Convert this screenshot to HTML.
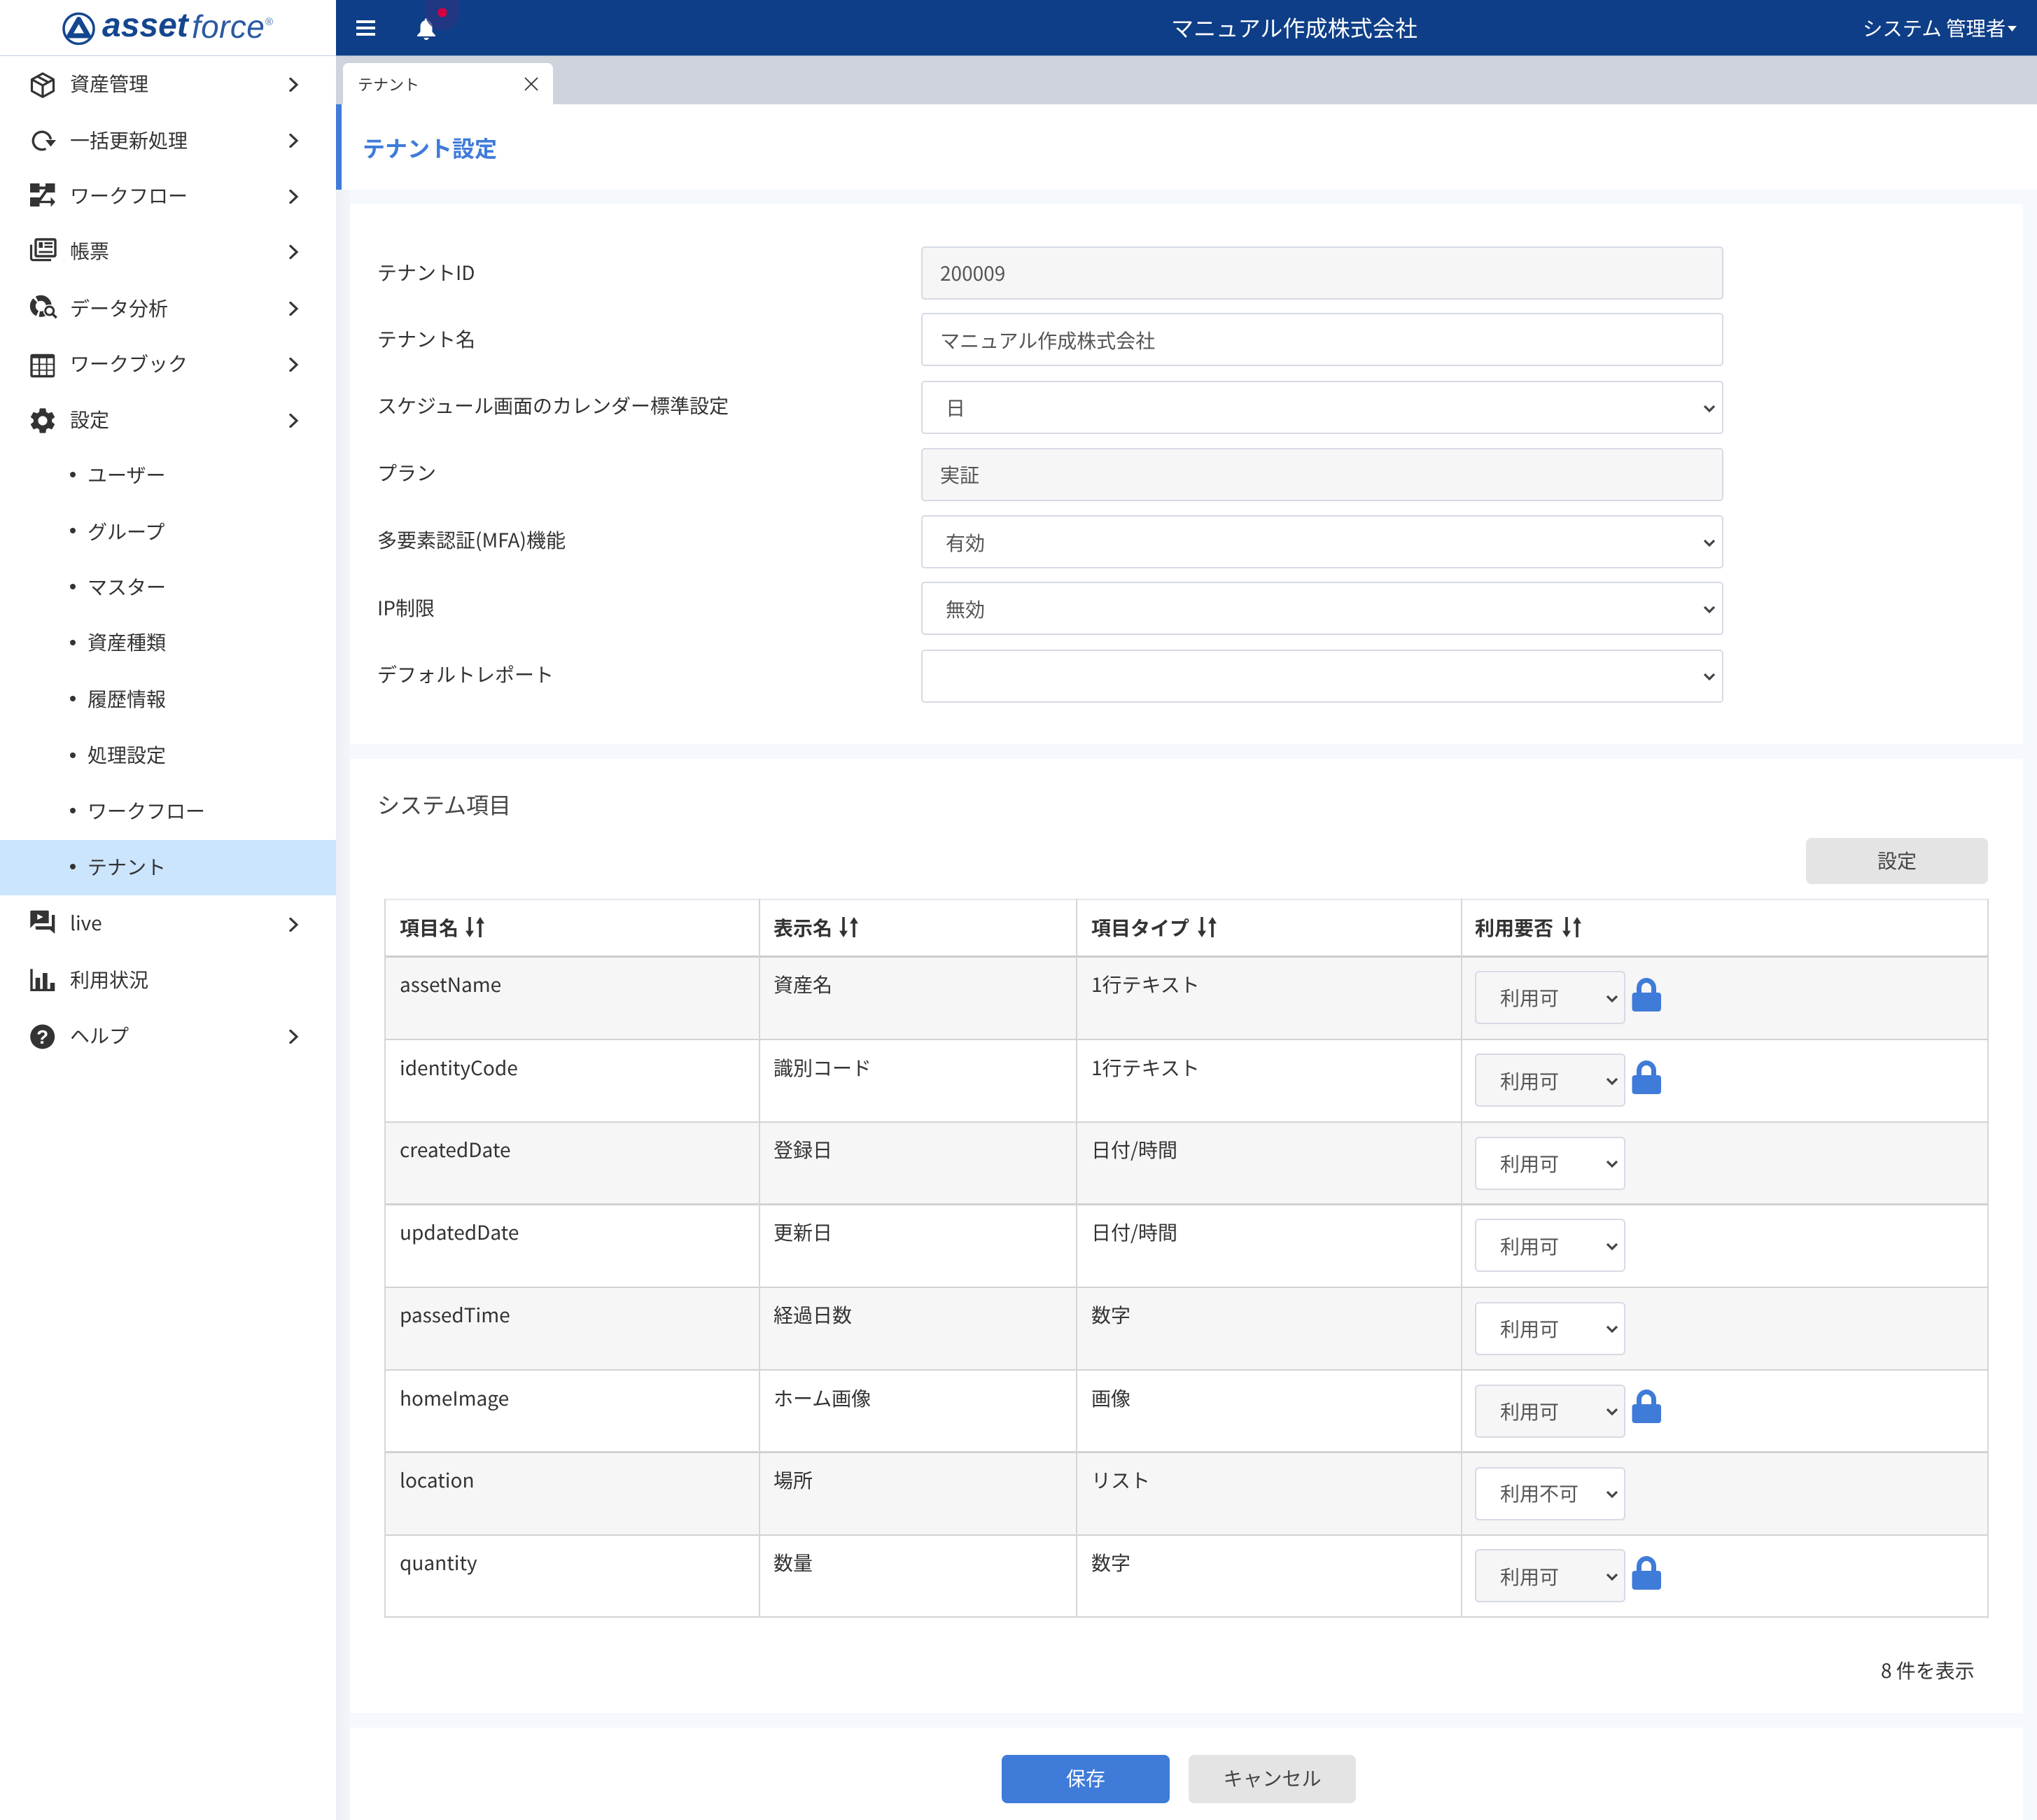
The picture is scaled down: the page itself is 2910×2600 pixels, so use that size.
<!DOCTYPE html>
<html lang="ja">
<head>
<meta charset="utf-8">
<title>テナント設定</title>
<style>
html,body{margin:0;padding:0;}
body{position:relative;width:2910px;height:2600px;overflow:hidden;background:#f5f8fd;color:#333;font-family:"Noto Sans CJK JP","Liberation Sans",sans-serif;font-size:28px;}
.a{position:absolute;}
.t{position:absolute;height:40px;line-height:40px;white-space:nowrap;}
svg{position:absolute;overflow:visible;display:block;}
.side{left:0;top:0;width:480px;height:2600px;background:#fff;}
.g{color:#555;}
.field{position:absolute;left:1316px;width:1146px;height:76px;box-sizing:border-box;border:2px solid #d6dae4;border-radius:5px;background:#fff;}
.field.dis{background:#f6f6f6;}
.sel{position:absolute;left:2107px;width:215px;height:76px;box-sizing:border-box;border:2px solid #d6dae4;border-radius:6px;background:#fff;}
.sel.dis{background:#f6f6f6;}
.row{position:absolute;left:549px;width:2291px;height:116px;}
.odd{background:#f6f6f6;}
.hl{position:absolute;left:549px;width:2292px;height:2px;background:#d2d2d2;}
.vl{position:absolute;top:1284px;width:2px;height:1026px;background:#d6d6d6;}
.btn{position:absolute;border-radius:8px;background:#e4e4e4;text-align:center;color:#444;}
b{font-weight:700;}
</style>
</head>
<body>
<!-- main backdrop -->
<div class="a" style="left:480px;top:80px;width:20px;height:2520px;background:linear-gradient(90deg,#eceff5,#f2f5fa);"></div>
<div class="a" style="left:480px;top:80px;width:2430px;height:69px;background:#ced3dc;"></div>
<div class="a" style="left:480px;top:149px;width:2430px;height:122px;background:#fff;"></div>
<div class="a" style="left:480px;top:149px;width:8px;height:122px;background:#3f7bd8;"></div>
<div class="a" style="left:500px;top:292px;width:2390px;height:771px;background:#fff;"></div>
<div class="a" style="left:500px;top:1084px;width:2390px;height:1363px;background:#fff;"></div>
<div class="a" style="left:500px;top:2468px;width:2390px;height:132px;background:#fff;"></div>

<!-- header -->
<div class="a" style="left:480px;top:0;width:2430px;height:79px;background:#0e3e87;border-bottom:1px solid #7d92b8;"></div>
<div class="a" style="left:509px;top:29px;width:27px;height:4px;background:#fff;"></div>
<div class="a" style="left:509px;top:38px;width:27px;height:4px;background:#fff;"></div>
<div class="a" style="left:509px;top:47px;width:27px;height:4px;background:#fff;"></div>
<svg style="left:595px;top:26px;" width="28" height="31" viewBox="0 0 28 31"><path fill="#fff" d="M14 0c1.400 0 2.200 1 2.200 2.300v1c4.300 1.100 6.300 4.700 6.300 9.200v7l4.500 5v1.500H1v-1.500l4.500-5v-7c0-4.500 2-8.100 6.300-9.200v-1C11.800 1 12.600 0 14 0zM10.500 28h7c0 1.800-1.500 3-3.500 3s-3.500-1.200-3.500-3z"/></svg>
<div class="a" style="left:607px;top:0;width:50px;height:43px;border-radius:0 0 25px 25px;background:#2a3680;opacity:.75;"></div>
<div class="a" style="left:626px;top:12px;width:12px;height:12px;border-radius:4px;background:#d9003f;"></div>
<div class="t" style="left:1673px;top:19px;color:#fff;font-size:32.100px;">マニュアル作成株式会社</div>
<div class="t" style="left:2661px;top:20px;color:#fff;font-size:28.400px;">システム 管理者</div>
<svg style="left:2868px;top:37px;" width="13" height="8"><path fill="#fff" d="M0 0H13L6.500 8z"/></svg>

<!-- tab -->
<div class="a" style="left:490px;top:90px;width:300px;height:59px;background:#fff;border-radius:8px 8px 0 0;"></div>
<div class="t" style="left:511px;top:100px;font-size:22px;">テナント</div>
<svg style="left:749px;top:110px;" width="20" height="20"><path d="M1 1L19 19M19 1L1 19" stroke="#333" stroke-width="1.800" fill="none"/></svg>
<div class="t" style="left:518px;top:191px;font-size:32px;font-weight:700;color:#3f7bd8;">テナント設定</div>

<!-- sidebar -->
<div class="a side"></div>
<div class="a" style="left:0;top:79px;width:480px;height:1px;background:#c9d2e0;"></div>
<svg style="left:89px;top:18px;" width="47" height="46" viewBox="0 0 47 46"><circle cx="23.500" cy="23" r="21.500" fill="none" stroke="#14468f" stroke-width="3.500"/><path d="M23.500 9.500L37 33H10z" fill="none" stroke="#14468f" stroke-width="7" stroke-linejoin="round"/></svg>
<div class="t" style="left:146px;top:10px;height:54px;line-height:54px;font-family:'Liberation Sans',sans-serif;font-size:48px;font-weight:700;font-style:italic;color:#14468f;">asset</div>
<div class="t" style="left:274px;top:11px;height:54px;line-height:54px;font-family:'Liberation Sans',sans-serif;font-size:46px;font-style:italic;letter-spacing:.4px;color:#2a5aa0;">force</div>
<div class="t" style="left:379px;top:22px;height:20px;line-height:20px;font-family:'Liberation Sans',sans-serif;font-size:15px;color:#3f6aa6;">®</div>

<div class="t" style="left:100px;top:99px;">資産管理</div>
<div class="t" style="left:100px;top:180px;">一括更新処理</div>
<div class="t" style="left:100px;top:259px;">ワークフロー</div>
<div class="t" style="left:100px;top:338px;">帳票</div>
<div class="t" style="left:100px;top:420px;">データ分析</div>
<div class="t" style="left:100px;top:499px;">ワークブック</div>
<div class="t" style="left:100px;top:579px;">設定</div>

<div class="a" style="left:0;top:1200px;width:480px;height:79px;background:#cbe5fd;"></div>
<div class="a" style="left:100px;top:674px;width:8px;height:8px;border-radius:50%;background:#333;"></div><div class="t" style="left:125px;top:658px;">ユーザー</div>
<div class="a" style="left:100px;top:754px;width:8px;height:8px;border-radius:50%;background:#333;"></div><div class="t" style="left:125px;top:739px;">グループ</div>
<div class="a" style="left:100px;top:834px;width:8px;height:8px;border-radius:50%;background:#333;"></div><div class="t" style="left:125px;top:818px;">マスター</div>
<div class="a" style="left:100px;top:914px;width:8px;height:8px;border-radius:50%;background:#333;"></div><div class="t" style="left:125px;top:897px;">資産種類</div>
<div class="a" style="left:100px;top:994px;width:8px;height:8px;border-radius:50%;background:#333;"></div><div class="t" style="left:125px;top:978px;">履歴情報</div>
<div class="a" style="left:100px;top:1075px;width:8px;height:8px;border-radius:50%;background:#333;"></div><div class="t" style="left:125px;top:1058px;">処理設定</div>
<div class="a" style="left:100px;top:1154px;width:8px;height:8px;border-radius:50%;background:#333;"></div><div class="t" style="left:125px;top:1138px;">ワークフロー</div>
<div class="a" style="left:100px;top:1234px;width:8px;height:8px;border-radius:50%;background:#333;"></div><div class="t" style="left:125px;top:1218px;">テナント</div>

<div class="t" style="left:100px;top:1298px;">live</div>
<div class="t" style="left:100px;top:1379px;">利用状況</div>
<div class="t" style="left:100px;top:1459px;">ヘルプ</div>

<!-- sidebar chevrons -->
<svg style="left:412px;top:110px;" width="14" height="22"><path d="M2 1.500L12 11L2 20.500" fill="none" stroke="#333" stroke-width="3.200"/></svg>
<svg style="left:412px;top:190px;" width="14" height="22"><path d="M2 1.500L12 11L2 20.500" fill="none" stroke="#333" stroke-width="3.200"/></svg>
<svg style="left:412px;top:270px;" width="14" height="22"><path d="M2 1.500L12 11L2 20.500" fill="none" stroke="#333" stroke-width="3.200"/></svg>
<svg style="left:412px;top:349px;" width="14" height="22"><path d="M2 1.500L12 11L2 20.500" fill="none" stroke="#333" stroke-width="3.200"/></svg>
<svg style="left:412px;top:430px;" width="14" height="22"><path d="M2 1.500L12 11L2 20.500" fill="none" stroke="#333" stroke-width="3.200"/></svg>
<svg style="left:412px;top:510px;" width="14" height="22"><path d="M2 1.500L12 11L2 20.500" fill="none" stroke="#333" stroke-width="3.200"/></svg>
<svg style="left:412px;top:590px;" width="14" height="22"><path d="M2 1.500L12 11L2 20.500" fill="none" stroke="#333" stroke-width="3.200"/></svg>
<svg style="left:412px;top:1310px;" width="14" height="22"><path d="M2 1.500L12 11L2 20.500" fill="none" stroke="#333" stroke-width="3.200"/></svg>
<svg style="left:412px;top:1470px;" width="14" height="22"><path d="M2 1.500L12 11L2 20.500" fill="none" stroke="#333" stroke-width="3.200"/></svg>

<!-- sidebar icons -->
<svg style="left:43px;top:103px;" width="36" height="37" viewBox="0 0 36 37"><path d="M18 2L33.500 10.500V27L18 35.500L2.500 27V10.500z M2.500 10.500L18 19L33.500 10.500 M18 19V35.500 M10 6L26 14.500" fill="none" stroke="#333" stroke-width="3.200" stroke-linejoin="round"/></svg>
<svg style="left:43px;top:182px;" width="37" height="36" viewBox="0 0 37 36"><path d="M29.500 17A12.700 12.700 0 1 0 22.500 30.500" fill="none" stroke="#333" stroke-width="3.400"/><path d="M22 18H37L29.500 27.500z" fill="#333"/></svg>
<svg style="left:43px;top:261px;" width="37" height="36" viewBox="0 0 37 36"><path d="M0 1H13.500V14H0zM22 1H35.500V14H22zM0 21H13.500V34H0z" fill="#333"/><path d="M12 7.500H24M25 9L12 27" fill="none" stroke="#333" stroke-width="4"/><path d="M13 27.500H30" stroke="#333" stroke-width="3.200"/><path d="M29.500 20.500L36 27.500L29.500 34.500z" fill="#333"/></svg>
<svg style="left:43px;top:340px;" width="37" height="34" viewBox="0 0 37 34"><path d="M9.500 2h25a1.500 1.500 0 0 1 1.500 1.500v21a1.500 1.500 0 0 1-1.500 1.500h-25A1.500 1.500 0 0 1 8 24.500v-21A1.500 1.500 0 0 1 9.500 2z" fill="none" stroke="#333" stroke-width="3.400"/><path d="M1.500 9.500V29a2.500 2.500 0 0 0 2.500 2.500H30" fill="none" stroke="#333" stroke-width="3.200"/><path d="M12.500 6H18V14H12.500z" fill="#333"/><path d="M20.500 7.500H32M20.500 12.500H32M12.500 20H32" stroke="#333" stroke-width="2.800"/></svg>
<svg style="left:43px;top:422px;" width="39" height="33" viewBox="0 0 39 33"><circle cx="15.300" cy="15.300" r="11.500" fill="none" stroke="#333" stroke-width="8" stroke-dasharray="20 3 22 3 24 1"/><circle cx="27.700" cy="22" r="9" fill="#fff"/><circle cx="27.700" cy="22" r="6" fill="none" stroke="#333" stroke-width="3"/><path d="M32 26.500L37.700 32" stroke="#333" stroke-width="3.400"/></svg>
<svg style="left:43px;top:505px;" width="36" height="35" viewBox="0 0 36 35"><rect x=".3" y=".7" width="35" height="33.500" rx="3" fill="#333"/><path fill="#fff" d="M3.700 6.700H12V14.600H3.700zM14.300 6.700H22.700V14.600H14.300zM24.700 6.700H32.700V14.600H24.700zM3.700 16.200H12V23H3.700zM14.300 16.200H22.700V23H14.300zM24.700 16.200H32.700V23H24.700zM3.700 24.600H12V30.800H3.700zM14.300 24.600H22.700V30.800H14.300zM24.700 24.600H32.700V30.800H24.700z"/></svg>
<svg style="left:39px;top:579px;" width="44" height="44" viewBox="0 0 24 24"><path fill="#333" d="M19.140 12.940c.04-.3.06-.61.06-.94 0-.32-.02-.64-.07-.94l2.030-1.580c.18-.14.23-.41.120-.61l-1.920-3.320c-.12-.22-.37-.29-.59-.22l-2.390.96c-.5-.38-1.030-.7-1.620-.94l-.36-2.540c-.04-.24-.24-.41-.48-.41h-3.840c-.24 0-.43.17-.47.41l-.36 2.540c-.59.24-1.130.57-1.620.94l-2.390-.96c-.22-.08-.47 0-.59.22L2.740 8.870c-.12.21-.08.47.12.61l2.030 1.580c-.05.3-.09.63-.09.94s.02.64.07.94l-2.030 1.580c-.18.14-.23.41-.12.61l1.920 3.320c.12.22.37.29.59.22l2.390-.96c.5.38 1.030.7 1.620.94l.36 2.540c.05.24.24.41.48.41h3.840c.24 0 .44-.17.47-.41l.36-2.540c.59-.24 1.130-.56 1.620-.94l2.390.96c.22.08.47 0 .59-.22l1.920-3.320c.12-.22.07-.47-.12-.61l-2.010-1.580zM12 15.600c-1.980 0-3.600-1.620-3.600-3.600s1.620-3.600 3.600-3.600 3.600 1.620 3.600 3.600-1.620 3.600-3.600 3.600z"/></svg>
<svg style="left:43px;top:1299px;" width="36" height="36" viewBox="0 0 36 36"><path fill="#333" d="M2 1.700H25a1.700 1.700 0 0 1 1.700 1.700V20H7L.3 26.700V3.400A1.700 1.700 0 0 1 2 1.700z"/><path fill="#fff" d="M10.300 6.700L18.700 11L10.300 15z"/><path fill="#333" d="M31 8H35.300V35L28.300 29H9.500A2 2 0 0 1 7.700 27V24.300H31z"/></svg>
<svg style="left:43px;top:1384px;" width="36" height="32" viewBox="0 0 36 32"><path fill="#333" d="M.3 .3H3.700V28.700H35.300V32H.3zM7.700 12.700H14.300V28.700H7.700zM18 6H24.700V28.700H18zM28.700 20H35.300V28.700H28.700z"/></svg>
<svg style="left:43px;top:1463px;" width="36" height="36" viewBox="0 0 36 36"><circle cx="17.700" cy="18" r="17.500" fill="#333"/><text x="17.700" y="28" text-anchor="middle" fill="#fff" font-family="Liberation Sans" font-weight="700" font-size="28">?</text></svg>

<!-- form 1 -->
<div class="t" style="left:539px;top:369px;">テナントID</div>
<div class="t" style="left:539px;top:464px;">テナント名</div>
<div class="t" style="left:539px;top:559px;">スケジュール画面のカレンダー標準設定</div>
<div class="t" style="left:539px;top:655px;">プラン</div>
<div class="t" style="left:539px;top:751px;">多要素認証(MFA)機能</div>
<div class="t" style="left:539px;top:848px;">IP制限</div>
<div class="t" style="left:539px;top:943px;">デフォルトレポート</div>

<div class="field dis" style="top:352px;"></div><div class="t g" style="left:1343px;top:370px;">200009</div>
<div class="field" style="top:447px;"></div><div class="t g" style="left:1343px;top:466px;">マニュアル作成株式会社</div>
<div class="field" style="top:544px;"></div><div class="t g" style="left:1351px;top:562px;">日</div>
<div class="field dis" style="top:640px;"></div><div class="t g" style="left:1343px;top:658px;">実証</div>
<div class="field" style="top:736px;"></div><div class="t g" style="left:1351px;top:755px;">有効</div>
<div class="field" style="top:831px;"></div><div class="t g" style="left:1351px;top:850px;">無効</div>
<div class="field" style="top:928px;"></div>
<svg style="left:2433px;top:578px;" width="18" height="11"><path d="M2 2L9 9L16 2" fill="none" stroke="#444" stroke-width="3.200"/></svg>
<svg style="left:2433px;top:770px;" width="18" height="11"><path d="M2 2L9 9L16 2" fill="none" stroke="#444" stroke-width="3.200"/></svg>
<svg style="left:2433px;top:865px;" width="18" height="11"><path d="M2 2L9 9L16 2" fill="none" stroke="#444" stroke-width="3.200"/></svg>
<svg style="left:2433px;top:961px;" width="18" height="11"><path d="M2 2L9 9L16 2" fill="none" stroke="#444" stroke-width="3.200"/></svg>

<!-- system items -->
<div class="t" style="left:539px;top:1129px;font-size:32px;color:#444;">システム項目</div>
<div class="btn" style="left:2580px;top:1197px;width:260px;height:66px;line-height:65px;">設定</div>

<!-- table backgrounds -->
<div class="row odd" style="top:1368px;"></div>
<div class="row odd" style="top:1604px;"></div>
<div class="row odd" style="top:1840px;"></div>
<div class="row odd" style="top:2076px;"></div>
<div class="hl" style="top:1284px;background:#e6e8ee;"></div>
<div class="hl" style="top:1365px;height:3px;background:#cdcdcd;"></div>
<div class="hl" style="top:1484px;"></div>
<div class="hl" style="top:1602px;"></div>
<div class="hl" style="top:1719px;height:3px;"></div>
<div class="hl" style="top:1838px;"></div>
<div class="hl" style="top:1956px;"></div>
<div class="hl" style="top:2073px;height:3px;"></div>
<div class="hl" style="top:2192px;"></div>
<div class="hl" style="top:2309px;height:2px;"></div>
<div class="vl" style="left:549px;"></div>
<div class="vl" style="left:1084px;"></div>
<div class="vl" style="left:1537px;"></div>
<div class="vl" style="left:2087px;"></div>
<div class="vl" style="left:2839px;"></div>

<!-- table head -->
<div class="t" style="left:571px;top:1305px;"><b>項目名</b></div>
<div class="t" style="left:1105px;top:1305px;"><b>表示名</b></div>
<div class="t" style="left:1559px;top:1305px;"><b>項目タイプ</b></div>
<div class="t" style="left:2107px;top:1305px;"><b>利用要否</b></div>
<svg style="left:665px;top:1310px;" width="27" height="29" viewBox="0 0 26 28"><path fill="#333" d="M4 0H7.500V19H11.500L5.750 28L0 19H4zM18.500 28H22V9H26L20.250 0L14.500 9H18.500z"/></svg>
<svg style="left:1199px;top:1310px;" width="27" height="29" viewBox="0 0 26 28"><path fill="#333" d="M4 0H7.500V19H11.500L5.750 28L0 19H4zM18.500 28H22V9H26L20.250 0L14.500 9H18.500z"/></svg>
<svg style="left:1711px;top:1310px;" width="27" height="29" viewBox="0 0 26 28"><path fill="#333" d="M4 0H7.500V19H11.500L5.750 28L0 19H4zM18.500 28H22V9H26L20.250 0L14.500 9H18.500z"/></svg>
<svg style="left:2232px;top:1310px;" width="27" height="29" viewBox="0 0 26 28"><path fill="#333" d="M4 0H7.500V19H11.500L5.750 28L0 19H4zM18.500 28H22V9H26L20.250 0L14.500 9H18.500z"/></svg>

<!-- rows -->
<div class="t" style="left:571px;top:1386px;">assetName</div><div class="t" style="left:1105px;top:1386px;">資産名</div><div class="t" style="left:1559px;top:1386px;">1行テキスト</div>
<div class="t" style="left:571px;top:1505px;">identityCode</div><div class="t" style="left:1105px;top:1505px;">識別コード</div><div class="t" style="left:1559px;top:1505px;">1行テキスト</div>
<div class="t" style="left:571px;top:1622px;">createdDate</div><div class="t" style="left:1105px;top:1622px;">登録日</div><div class="t" style="left:1559px;top:1622px;">日付/時間</div>
<div class="t" style="left:571px;top:1740px;">updatedDate</div><div class="t" style="left:1105px;top:1740px;">更新日</div><div class="t" style="left:1559px;top:1740px;">日付/時間</div>
<div class="t" style="left:571px;top:1858px;">passedTime</div><div class="t" style="left:1105px;top:1858px;">経過日数</div><div class="t" style="left:1559px;top:1858px;">数字</div>
<div class="t" style="left:571px;top:1977px;">homeImage</div><div class="t" style="left:1105px;top:1977px;">ホーム画像</div><div class="t" style="left:1559px;top:1977px;">画像</div>
<div class="t" style="left:571px;top:2094px;">location</div><div class="t" style="left:1105px;top:2094px;">場所</div><div class="t" style="left:1559px;top:2094px;">リスト</div>
<div class="t" style="left:571px;top:2212px;">quantity</div><div class="t" style="left:1105px;top:2212px;">数量</div><div class="t" style="left:1559px;top:2212px;">数字</div>

<!-- selects -->
<div class="sel dis" style="top:1387px;"></div><div class="t g" style="left:2143px;top:1405px;">利用可</div>
<div class="sel dis" style="top:1505px;"></div><div class="t g" style="left:2143px;top:1524px;">利用可</div>
<div class="sel" style="top:1624px;"></div><div class="t g" style="left:2143px;top:1642px;">利用可</div>
<div class="sel" style="top:1741px;"></div><div class="t g" style="left:2143px;top:1760px;">利用可</div>
<div class="sel" style="top:1860px;"></div><div class="t g" style="left:2143px;top:1878px;">利用可</div>
<div class="sel dis" style="top:1978px;"></div><div class="t g" style="left:2143px;top:1996px;">利用可</div>
<div class="sel" style="top:2096px;"></div><div class="t g" style="left:2143px;top:2113px;">利用不可</div>
<div class="sel dis" style="top:2213px;"></div><div class="t g" style="left:2143px;top:2232px;">利用可</div>

<svg style="left:2294px;top:1421px;" width="18" height="11"><path d="M2 2L9 9L16 2" fill="none" stroke="#444" stroke-width="3.200"/></svg>
<svg style="left:2294px;top:1539px;" width="18" height="11"><path d="M2 2L9 9L16 2" fill="none" stroke="#444" stroke-width="3.200"/></svg>
<svg style="left:2294px;top:1657px;" width="18" height="11"><path d="M2 2L9 9L16 2" fill="none" stroke="#444" stroke-width="3.200"/></svg>
<svg style="left:2294px;top:1775px;" width="18" height="11"><path d="M2 2L9 9L16 2" fill="none" stroke="#444" stroke-width="3.200"/></svg>
<svg style="left:2294px;top:1893px;" width="18" height="11"><path d="M2 2L9 9L16 2" fill="none" stroke="#444" stroke-width="3.200"/></svg>
<svg style="left:2294px;top:2011px;" width="18" height="11"><path d="M2 2L9 9L16 2" fill="none" stroke="#444" stroke-width="3.200"/></svg>
<svg style="left:2294px;top:2129px;" width="18" height="11"><path d="M2 2L9 9L16 2" fill="none" stroke="#444" stroke-width="3.200"/></svg>
<svg style="left:2294px;top:2247px;" width="18" height="11"><path d="M2 2L9 9L16 2" fill="none" stroke="#444" stroke-width="3.200"/></svg>

<!-- locks -->
<svg style="left:2331px;top:1397px;" width="42" height="48" viewBox="0 0 42 48"><rect x=".5" y="21" width="41.500" height="27" rx="4" fill="#3f7bd8"/><path d="M10.500 24V14.500a10.500 11 0 0 1 21 0V24" fill="none" stroke="#3f7bd8" stroke-width="7"/></svg>
<svg style="left:2331px;top:1515px;" width="42" height="48" viewBox="0 0 42 48"><rect x=".5" y="21" width="41.500" height="27" rx="4" fill="#3f7bd8"/><path d="M10.500 24V14.500a10.500 11 0 0 1 21 0V24" fill="none" stroke="#3f7bd8" stroke-width="7"/></svg>
<svg style="left:2331px;top:1985px;" width="42" height="48" viewBox="0 0 42 48"><rect x=".5" y="21" width="41.500" height="27" rx="4" fill="#3f7bd8"/><path d="M10.500 24V14.500a10.500 11 0 0 1 21 0V24" fill="none" stroke="#3f7bd8" stroke-width="7"/></svg>
<svg style="left:2331px;top:2223px;" width="42" height="48" viewBox="0 0 42 48"><rect x=".5" y="21" width="41.500" height="27" rx="4" fill="#3f7bd8"/><path d="M10.500 24V14.500a10.500 11 0 0 1 21 0V24" fill="none" stroke="#3f7bd8" stroke-width="7"/></svg>

<div class="t" style="left:2687px;top:2366px;">8 件を表示</div>

<!-- footer buttons -->
<div class="btn" style="left:1431px;top:2507px;width:240px;height:69px;line-height:67px;background:#3f7bd8;color:#fff;">保存</div>
<div class="btn" style="left:1698px;top:2507px;width:239px;height:69px;line-height:67px;">キャンセル</div>
</body>
</html>
